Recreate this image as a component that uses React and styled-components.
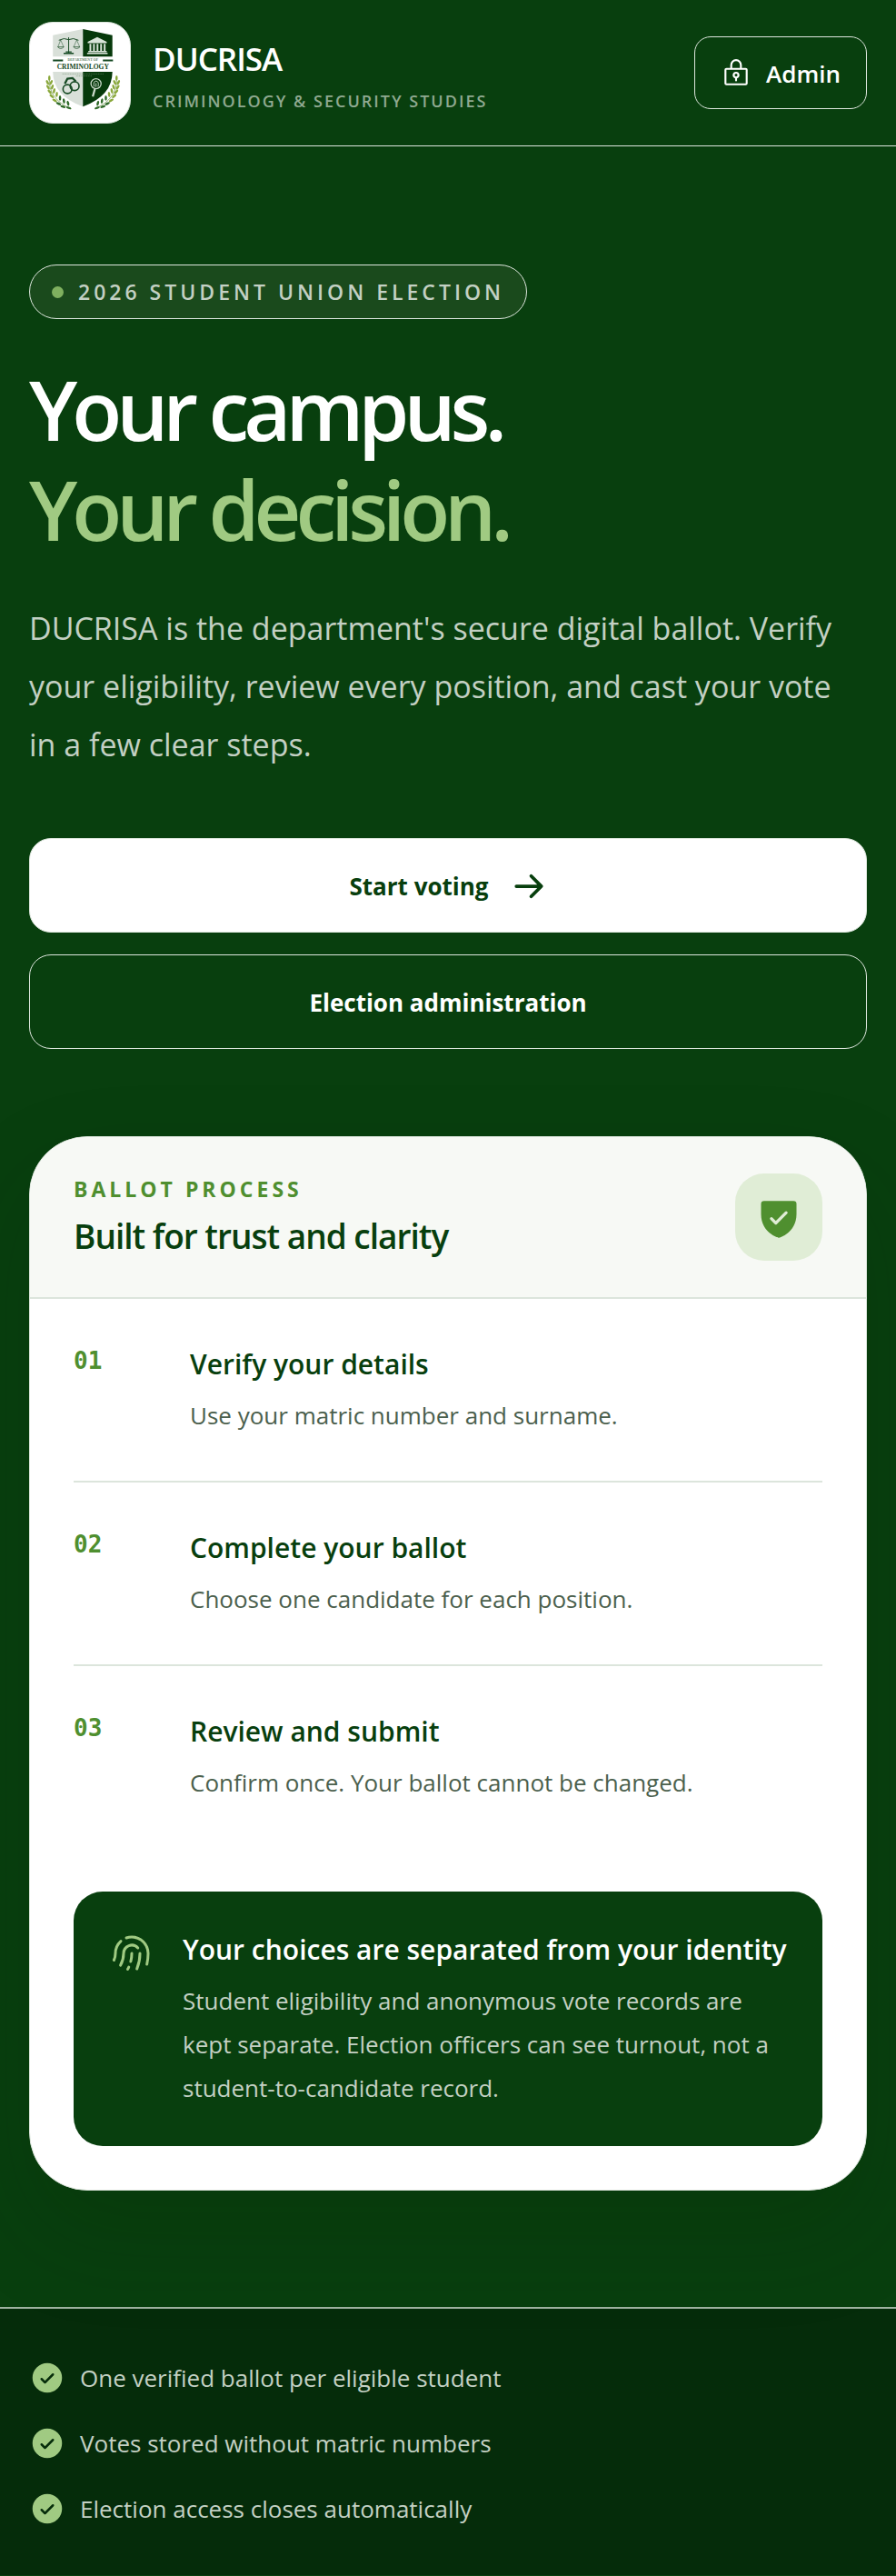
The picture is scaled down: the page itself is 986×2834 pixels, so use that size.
import React from 'react';
import styled, { createGlobalStyle, ThemeProvider } from 'styled-components';
import {
  PiArrowRightBold,
  PiCheckCircleFill,
  PiFingerprintSimple,
  PiLockKey,
  PiShieldCheckFill,
} from 'react-icons/pi';

const theme = {
  colors: {
    forest: '#083f0e',
    forestDeep: '#052c0a',
    forestSoft: '#1a4a1c',
    leaf: '#4f8f2f',
    leafLight: '#a0ca82',
    leafPale: '#e0edd6',
    mist: '#f7f9f5',
    line: '#dce5dc',
    outline: '#dde6dd',
    textSoft: '#c3d0c3',
    textMuted: '#8fa990',
    textBody: '#4b604d',
    white: '#ffffff',
  },
  fonts: {
    body: '"Segoe UI", "Open Sans", "Noto Sans", sans-serif',
    mono: 'Consolas, "DejaVu Sans Mono", "Liberation Mono", monospace',
  },
};

const GlobalStyle = createGlobalStyle`
  *, *::before, *::after {
    box-sizing: border-box;
  }
  body {
    margin: 0;
    background: ${(props) => props.theme.colors.forest};
    color: ${(props) => props.theme.colors.white};
    font-family: ${(props) => props.theme.fonts.body};
    font-size: 26px;
    line-height: 48px;
  }
  h1, h2, h3, p, ol, ul {
    margin: 0;
    padding: 0;
  }
  ol, ul {
    list-style: none;
  }
  a {
    color: inherit;
    text-decoration: none;
  }
`;

const Header = styled.header`
  display: flex;
  align-items: center;
  justify-content: space-between;
  padding: 24px 32px;
  border-bottom: 1px solid ${(props) => props.theme.colors.outline};
`;

const Brand = styled.a`
  display: flex;
  align-items: center;
  gap: 24px;
`;

const Crest = styled.svg`
  width: 112px;
  height: 112px;
  border: 1px solid ${(props) => props.theme.colors.line};
  border-radius: 26px;
  background: ${(props) => props.theme.colors.white};
`;

const BrandText = styled.span`
  display: flex;
  flex-direction: column;
  padding-top: 10px;
`;

const BrandName = styled.span`
  font-size: 35px;
  font-weight: 600;
  letter-spacing: -1px;
  line-height: 52px;
`;

const BrandTagline = styled.span`
  color: ${(props) => props.theme.colors.textMuted};
  font-size: 18px;
  font-weight: 600;
  letter-spacing: 2px;
  line-height: 40px;
`;

const AdminButton = styled.button`
  display: flex;
  align-items: center;
  gap: 16px;
  height: 80px;
  padding: 2px 28px 0;
  border: 1px solid ${(props) => props.theme.colors.outline};
  border-radius: 18px;
  background: transparent;
  color: ${(props) => props.theme.colors.white};
  font-family: inherit;
  font-size: 26px;
  font-weight: 600;
  cursor: pointer;
  svg {
    width: 34px;
    height: 34px;
  }
`;

const Main = styled.main`
  display: grid;
  gap: 96px;
  padding: 130px 32px 128px;
`;

const Hero = styled.section`
  display: flex;
  flex-direction: column;
  align-items: flex-start;
`;

const Pill = styled.p`
  display: flex;
  align-items: center;
  gap: 16px;
  padding: 5px 24px;
  border: 1px solid ${(props) => props.theme.colors.outline};
  border-radius: 30px;
  background: ${(props) => props.theme.colors.forestSoft};
  color: ${(props) => props.theme.colors.textSoft};
  font-size: 23px;
  font-weight: 600;
  letter-spacing: 4px;
`;

const Dot = styled.span`
  width: 13px;
  height: 13px;
  border-radius: 50%;
  background: #7fb05f;
`;

const Title = styled.h1`
  margin-top: 44px;
  font-size: 90px;
  font-weight: 600;
  letter-spacing: -6px;
  line-height: 110px;
  span {
    display: block;
    color: ${(props) => props.theme.colors.leafLight};
  }
`;

const Lead = styled.p`
  max-width: 920px;
  margin-top: 44px;
  color: ${(props) => props.theme.colors.textSoft};
  font-size: 34px;
  line-height: 64px;
`;

const Actions = styled.div`
  display: flex;
  flex-direction: column;
  align-self: stretch;
  gap: 24px;
  margin-top: 71px;
`;

const ActionLink = styled.a`
  display: flex;
  align-items: center;
  justify-content: center;
  gap: 24px;
  height: 104px;
  padding-top: 2px;
  border: 1px solid ${(props) => props.theme.colors.outline};
  border-radius: 24px;
  background: ${(props) => (props.$primary ? props.theme.colors.white : 'transparent')};
  color: ${(props) => (props.$primary ? props.theme.colors.forest : props.theme.colors.white)};
  font-weight: 700;
  svg {
    width: 40px;
    height: 40px;
  }
`;

const Card = styled.section`
  overflow: hidden;
  border: 1px solid ${(props) => props.theme.colors.line};
  border-radius: 64px;
  background: ${(props) => props.theme.colors.white};
  color: ${(props) => props.theme.colors.forest};
  box-shadow: 0 48px 112px rgba(3, 40, 8, 0.16);
`;

const CardHeader = styled.header`
  display: flex;
  align-items: center;
  justify-content: space-between;
  padding: 36px 48px;
  border-bottom: 2px solid ${(props) => props.theme.colors.line};
  background: ${(props) => props.theme.colors.mist};
`;

const Eyebrow = styled.p`
  color: ${(props) => props.theme.colors.leaf};
  font-size: 23px;
  font-weight: 700;
  letter-spacing: 4px;
  line-height: 42px;
`;

const CardTitle = styled.h2`
  font-size: 37px;
  font-weight: 600;
  letter-spacing: -1px;
  line-height: 62px;
`;

const ShieldBadge = styled.span`
  display: grid;
  place-items: center;
  width: 96px;
  height: 96px;
  border-radius: 32px;
  background: ${(props) => props.theme.colors.leafPale};
  color: ${(props) => props.theme.colors.leaf};
  svg {
    width: 52px;
    height: 52px;
  }
`;

const Steps = styled.ol`
  padding: 0 48px;
`;

const Step = styled.li`
  display: grid;
  grid-template-columns: 102px 1fr;
  column-gap: 26px;
  padding: 48px 0;
  & + & {
    border-top: 2px solid ${(props) => props.theme.colors.line};
  }
`;

const StepNumber = styled.span`
  color: ${(props) => props.theme.colors.leaf};
  font-family: ${(props) => props.theme.fonts.mono};
  font-size: 26px;
  font-weight: 700;
  line-height: 40px;
`;

const ItemTitle = styled.h3`
  font-size: 30px;
  font-weight: 600;
  line-height: 48px;
`;

const ItemText = styled.p`
  margin-top: 8px;
  color: ${(props) => props.theme.colors.textBody};
`;

const Notice = styled.aside`
  display: flex;
  align-items: flex-start;
  gap: 32px;
  margin: 48px;
  padding: 40px 36px 40px 40px;
  border-radius: 32px;
  background: ${(props) => props.theme.colors.forest};
  color: ${(props) => props.theme.colors.white};
  > svg {
    flex: none;
    width: 48px;
    height: 48px;
    margin-top: 4px;
    color: ${(props) => props.theme.colors.leafLight};
  }
  ${ItemText} {
    color: ${(props) => props.theme.colors.textSoft};
  }
`;

const Footer = styled.footer`
  padding: 52px 32px 49px;
  border-top: 2px solid #9fb3a1;
  background: ${(props) => props.theme.colors.forestDeep};
`;

const Assurances = styled.ul`
  display: grid;
  gap: 24px;
`;

const Assurance = styled.li`
  display: flex;
  align-items: center;
  gap: 16px;
  color: ${(props) => props.theme.colors.textSoft};
  svg {
    width: 40px;
    height: 40px;
    color: ${(props) => props.theme.colors.leafLight};
  }
`;

const steps = [
  { title: 'Verify your details', text: 'Use your matric number and surname.' },
  { title: 'Complete your ballot', text: 'Choose one candidate for each position.' },
  { title: 'Review and submit', text: 'Confirm once. Your ballot cannot be changed.' },
];

const assurances = [
  'One verified ballot per eligible student',
  'Votes stored without matric numbers',
  'Election access closes automatically',
];

// leaf position and tilt along the left branch of the wreath
const leaves = [
  [86, 213, 0],
  [80, 228, -28],
  [92, 228, 28],
  [82, 244, -34],
  [96, 243, 20],
  [87, 259, -42],
  [102, 256, 12],
  [94, 274, -50],
  [111, 268, 6],
  [104, 288, -58],
  [122, 280, 0],
  [117, 299, -66],
  [135, 290, -8],
  [132, 309, -74],
  [149, 298, -16],
  [151, 313, -70],
];

const Branch = () => (
  <g>
    <path d="M86 214Q82 284 160 316" fill="none" stroke="#5d8b32" strokeWidth="2" />
    {leaves.map(([x, y, tilt], index) => (
      <ellipse
        key={`${x}-${y}`}
        cx={x}
        cy={y}
        rx="4"
        ry="9"
        fill={index > 9 ? '#2f6a28' : '#8aa83c'}
        transform={`rotate(${tilt} ${x} ${y})`}
      />
    ))}
  </g>
);

const CrestLogo = () => (
  <Crest viewBox="21 27 336 336" role="img" aria-label="Department of Criminology">
    <path d="M98 69L199 48V141H98Z" fill="#d9e0d9" />
    <path d="M199 48L298 69V141H199Z" fill="#06390b" />
    <path d="M98 192H199V309Q98 272 98 192Z" fill="#d9e0d9" />
    <path d="M199 192H298Q298 272 199 309Z" fill="#06390b" />
    <g fill="none" stroke="#174a24" strokeWidth="3">
      <path d="M151 76V128M118 86Q136 76 151 84Q166 76 184 86" />
      <path d="M124 85L115 108M124 85L134 108M178 85L168 108M178 85L188 108" strokeWidth="1.5" />
      <path d="M114 108Q124 120 135 108ZM167 108Q178 120 189 108Z" strokeWidth="2" />
      <path d="M134 130H168M141 125H161" strokeWidth="4" />
      <circle cx="147" cy="250" r="15" strokeWidth="5" />
      <circle cx="171" cy="240" r="15" strokeWidth="5" />
      <path d="M138 232L147 215L164 213L175 224" strokeWidth="7" />
    </g>
    <g fill="#d9e4d9">
      <path d="M215 91L247 75L279 91V96H215Z" />
      <path d="M221 98H227V122H221ZM233 98H239V122H233ZM245 98H251V122H245ZM257 98H263V122H257ZM269 98H275V122H269Z" />
      <path d="M217 122H279V126H217ZM213 128H282V132H213Z" />
    </g>
    <g fill="none" stroke="#c9d8c9">
      <circle cx="243" cy="232" r="17" strokeWidth="4" />
      <path d="M237 242Q232 224 243 223Q254 224 250 242M243 230V243" strokeWidth="3" />
      <path d="M239 250L232 275" strokeWidth="7" />
    </g>
    <path d="M98 151H132V157H98ZM266 151H300V157H266Z" fill="#174a24" />
    <g fill="#174a24" fontFamily="Liberation Serif, serif" fontWeight="700" textAnchor="middle">
      <text x="199" y="156" fontSize="12" opacity="0.7">DEPARTMENT OF</text>
      <text x="199" y="182" fontSize="23">CRIMINOLOGY</text>
    </g>
    <path d="M130 199H268M176 206H230" stroke="#6e8f70" strokeWidth="2" strokeDasharray="3 2" />
    <Branch />
    <g transform="matrix(-1 0 0 1 398 0)">
      <Branch />
    </g>
  </Crest>
);

export default function App() {
  return (
    <ThemeProvider theme={theme}>
      <GlobalStyle />
      <Header>
        <Brand href="#home">
          <CrestLogo />
          <BrandText>
            <BrandName>DUCRISA</BrandName>
            <BrandTagline>CRIMINOLOGY &amp; SECURITY STUDIES</BrandTagline>
          </BrandText>
        </Brand>
        <AdminButton type="button">
          <PiLockKey />
          Admin
        </AdminButton>
      </Header>
      <Main>
        <Hero>
          <Pill>
            <Dot />
            2026 STUDENT UNION ELECTION
          </Pill>
          <Title>
            Your campus.
            <span>Your decision.</span>
          </Title>
          <Lead>
            DUCRISA is the department's secure digital ballot. Verify your eligibility, review
            every position, and cast your vote in a few clear steps.
          </Lead>
          <Actions>
            <ActionLink href="#vote" $primary>
              Start voting
              <PiArrowRightBold />
            </ActionLink>
            <ActionLink href="#administration">Election administration</ActionLink>
          </Actions>
        </Hero>
        <Card>
          <CardHeader>
            <div>
              <Eyebrow>BALLOT PROCESS</Eyebrow>
              <CardTitle>Built for trust and clarity</CardTitle>
            </div>
            <ShieldBadge>
              <PiShieldCheckFill />
            </ShieldBadge>
          </CardHeader>
          <Steps>
            {steps.map((step, index) => (
              <Step key={step.title}>
                <StepNumber>{`0${index + 1}`}</StepNumber>
                <div>
                  <ItemTitle>{step.title}</ItemTitle>
                  <ItemText>{step.text}</ItemText>
                </div>
              </Step>
            ))}
          </Steps>
          <Notice>
            <PiFingerprintSimple />
            <div>
              <ItemTitle>Your choices are separated from your identity</ItemTitle>
              <ItemText>
                Student eligibility and anonymous vote records are kept separate. Election officers
                can see turnout, not a student-to-candidate record.
              </ItemText>
            </div>
          </Notice>
        </Card>
      </Main>
      <Footer>
        <Assurances>
          {assurances.map((text) => (
            <Assurance key={text}>
              <PiCheckCircleFill />
              {text}
            </Assurance>
          ))}
        </Assurances>
      </Footer>
    </ThemeProvider>
  );
}
